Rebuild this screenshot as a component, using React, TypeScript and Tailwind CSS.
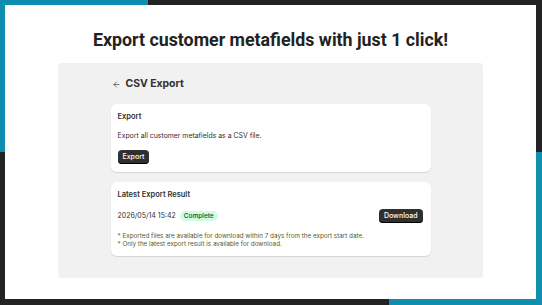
import { ArrowLeft } from 'lucide-react';

export default function App() {
  return (
    <div className="relative h-[305px] w-[542px] overflow-hidden bg-[#232323]">
      {/* decorative teal corners */}
      <div className="absolute left-0 top-0 h-[152px] w-[148px] bg-[#0f8fae]" />
      <div className="absolute bottom-0 right-0 h-[153px] w-[153px] bg-[#0f8fae]" />

      <div className="relative ml-[5px] mt-[5px] flex h-[294px] w-[531px] flex-col items-center bg-white">
        <h1
          className="mt-[23px] text-[17.8px] font-bold leading-[24px] text-[#222]"
          style={{ fontFamily: 'Roboto, "Noto Sans", sans-serif' }}
        >
          Export customer metafields with just 1 click!
        </h1>

        <div
          className="mt-[11px] flex h-[215px] w-[425px] flex-col items-center rounded-[3px] bg-[#f1f1f1] pt-[13px]"
          style={{ fontFamily: 'Inter, "Liberation Sans", sans-serif' }}
        >
          <div className="w-[320px]">
            <div className="flex h-[16px] items-center gap-[5px] pl-[1px] text-[#303030]">
              <ArrowLeft size={9} strokeWidth={2} className="text-[#4a4a4a]" />
              <span className="text-[10.4px] font-bold">CSV Export</span>
            </div>

            <div className="mt-[12px] flex h-[68px] flex-col rounded-[6px] bg-white px-[7px] pt-[8px] shadow-[0_1px_1px_rgba(0,0,0,0.12)]">
              <div className="text-[7.5px] font-semibold leading-[10px] text-[#303030]">Export</div>
              <div className="mt-[9px] text-[6.9px] leading-[10px] text-[#303030]">
                Export all customer metafields as a CSV file.
              </div>
              <div className="mt-[9px] flex">
                <button className="h-[14px] rounded-[4px] bg-[#303030] px-[5px] text-[7px] font-medium leading-[14px] text-white shadow-[inset_0_-1px_0_#000]">
                  Export
                </button>
              </div>
            </div>

            <div className="mt-[10px] flex h-[74px] flex-col rounded-[6px] bg-white px-[7px] pt-[8px] shadow-[0_1px_1px_rgba(0,0,0,0.12)]">
              <div className="text-[7.5px] font-semibold leading-[10px] text-[#303030]">Latest Export Result</div>
              <div className="mt-[9px] flex h-[14px] items-center justify-between">
                <div className="flex items-center gap-[4px]">
                  <span className="text-[7px] leading-[10px] text-[#303030]">2026/05/14 15:42</span>
                  <span className="rounded-[5px] bg-[#cdfee1] px-[4px] text-[6.5px] font-medium leading-[10px] text-[#0c5132]">
                    Complete
                  </span>
                </div>
                <button className="mr-[1px] h-[14px] rounded-[4px] bg-[#303030] px-[5px] text-[7px] font-medium leading-[14px] text-white shadow-[inset_0_-1px_0_#000]">
                  Download
                </button>
              </div>
              <div className="mt-[9px] text-[6.3px] leading-[8px] text-[#5b5a1f]">
                <div>* Exported files are available for download within 7 days from the export start date.</div>
                <div>* Only the latest export result is available for download.</div>
              </div>
            </div>
          </div>
        </div>
      </div>
    </div>
  );
}
